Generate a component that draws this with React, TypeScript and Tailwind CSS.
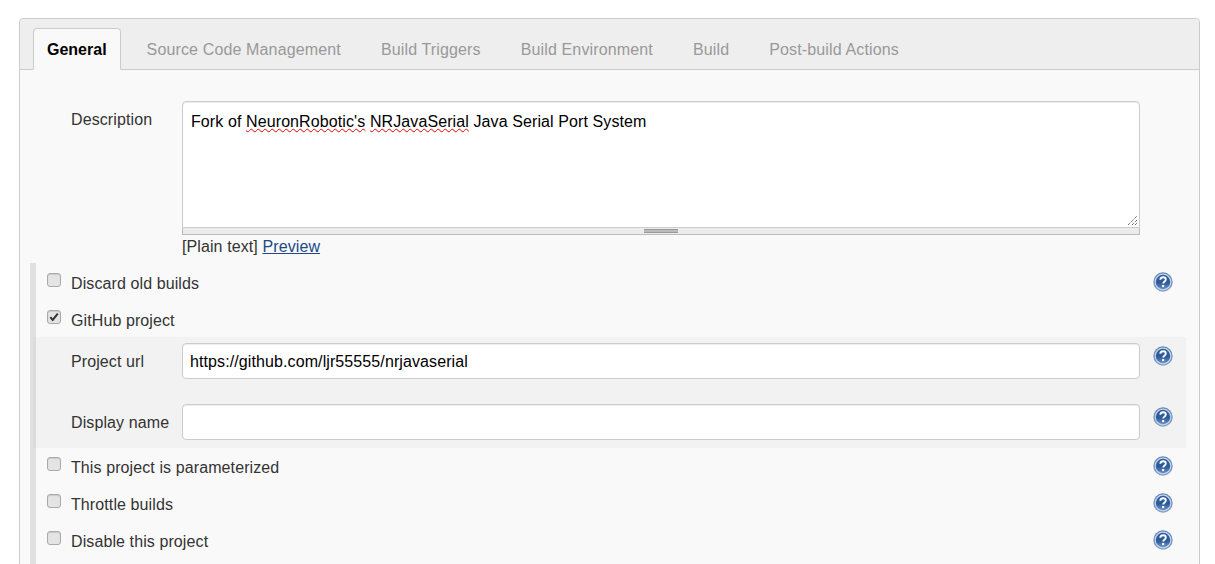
function HelpIcon() {
  return (
    <svg width="20" height="20" viewBox="0 0 20 20" className="shrink-0">
      <defs>
        <linearGradient id="ring" x1="0" y1="0" x2="0" y2="1">
          <stop offset="0" stopColor="#5f84b8" />
          <stop offset="1" stopColor="#7f9fca" />
        </linearGradient>
        <linearGradient id="ball" x1="0" y1="0" x2="0" y2="1">
          <stop offset="0" stopColor="#2f5d9c" />
          <stop offset="0.55" stopColor="#2c5a98" />
          <stop offset="1" stopColor="#6d90c2" />
        </linearGradient>
      </defs>
      <circle cx="10" cy="10" r="9.7" fill="url(#ring)" />
      <circle cx="10" cy="10" r="8.4" fill="#c5d3e6" />
      <circle cx="10" cy="10" r="7.2" fill="url(#ball)" />
      <path d="M7.3 7.8c0-1.7 1.2-2.6 2.8-2.6s2.7.9 2.7 2.3c0 1.2-.7 1.7-1.5 2.3-.7.5-1.1.9-1.1 1.8" fill="none" stroke="#fff" strokeWidth="1.9" />
      <rect x="9.1" y="13" width="2.1" height="2.1" fill="#fff" />
    </svg>
  );
}

function Check({ checked }: { checked?: boolean }) {
  return (
    <span className="flex items-center justify-center w-[14px] h-[14px] rounded-[3px] border border-[#aaa] bg-[#e4e4e4] shadow-[inset_0_1px_1px_rgba(0,0,0,0.12)] shrink-0 -mt-[6px]">
      {checked && (
        <svg width="10" height="10" viewBox="0 0 10 10">
          <path d="M1.3 5.2l2.4 2.7L8.8 1.6" fill="none" stroke="#333" strokeWidth="2" />
        </svg>
      )}
    </span>
  );
}

function CheckRow({ label, checked, help = true }: { label: string; checked?: boolean; help?: boolean }) {
  return (
    <div className="flex items-center h-[37px] pl-[11px] pr-[13px]">
      <Check checked={checked} />
      <span className="ml-[10px] flex-1 pt-[2px]">{label}</span>
      {help && <span className="-mt-[2px]"><HelpIcon /></span>}
    </div>
  );
}

function InputRow({ label, value }: { label: string; value?: string }) {
  return (
    <div className="flex items-start pl-[35px] pr-[13px]">
      <label className="w-[111px] h-[36px] flex items-center pt-[2px] shrink-0">{label}</label>
      <div className="w-[958px] h-[36px] flex items-center pt-[2px] px-[7px] bg-white text-black border border-[#ccc] rounded-[4px] shadow-[inset_0_1px_1px_rgba(0,0,0,0.075)] shrink-0">
        {value}
      </div>
      <span className="ml-[13px] mt-[3px]"><HelpIcon /></span>
    </div>
  );
}

const tabs = ["Source Code Management", "Build Triggers", "Build Environment", "Build", "Post-build Actions"];

export default function App() {
  return (
    <div className="h-[564px] overflow-hidden bg-white pt-[18px] pl-[19px] text-[16px] tracking-[0.1px] text-[#333] font-['Liberation_Sans',Arial,sans-serif]">
      <div className="w-[1181px] border border-[#ccc] rounded-t-[4px] bg-[#f9f9f9] h-[600px]">
        {/* tabs */}
        <div className="flex items-end h-[51px] bg-[#eee] border-b border-[#ccc] pl-[13px] rounded-t-[4px]">
          <div className="flex items-center h-[42px] pt-[2px] px-[13px] -mb-px bg-[#f9f9f9] border border-[#ccc] border-b-[#f9f9f9] rounded-t-[4px] text-black font-bold tracking-normal">
            General
          </div>
          <div className="flex gap-[40px] ml-[26px] h-[41px] pt-[2px] items-center text-[#999] tracking-[0.14px]">
            {tabs.map((t) => (
              <span key={t}>{t}</span>
            ))}
          </div>
        </div>

        {/* description */}
        <div className="flex items-start pl-[51px] pt-[31px]">
          <label className="w-[111px] pt-[9px] leading-[20px]">Description</label>
          <div className="w-[958px]">
            <div className="relative h-[127px] bg-white text-black border border-[#ccc] rounded-t-[4px] px-[8px] py-[10px] leading-[20px] shadow-[inset_0_1px_1px_rgba(0,0,0,0.075)]">
              Fork of{" "}
              <span className="underline decoration-wavy decoration-[#e00000] decoration-1 underline-offset-1">NeuronRobotic's</span>{" "}
              <span className="underline decoration-wavy decoration-[#e00000] decoration-1 underline-offset-1">NRJavaSerial</span>{" "}
              Java Serial Port System
              <svg width="11" height="11" viewBox="0 0 11 11" className="absolute right-[1px] bottom-[1px]">
                <path d="M1 10L10 1M5 10L10 5M8 10L10 8" stroke="#333" strokeWidth="1" strokeDasharray="1 1" fill="none" />
              </svg>
            </div>
            <div className="flex justify-center items-center h-[7px] bg-[#ececec] border border-t-0 border-[#bbb]">
              <div className="w-[34px] h-[4px] border-y border-[#999] bg-[#bbb]" />
            </div>
            <div className="mt-[2px] leading-[20px] h-[20px]">
              [Plain text] <a className="underline text-[#204a87]">Preview</a>
            </div>
          </div>
        </div>

        {/* options */}
        <div className="mt-[6px] pt-px ml-[10px] w-[1156px] pb-[40px] border-l-[6px] border-[#e0e0e0]">
          <CheckRow label="Discard old builds" />
          <CheckRow label="GitHub project" checked help={false} />
          <div className="-ml-[3px] -mt-px pt-[6px] pb-[8px] bg-[#f2f2f2] border-l-[3px] border-[#dcdcdc] flex flex-col gap-[25px]">
            <InputRow label="Project url" value="https://github.com/ljr55555/nrjavaserial" />
            <InputRow label="Display name" />
          </div>
          <CheckRow label="This project is parameterized" />
          <CheckRow label="Throttle builds" />
          <CheckRow label="Disable this project" />
        </div>
      </div>
    </div>
  );
}
